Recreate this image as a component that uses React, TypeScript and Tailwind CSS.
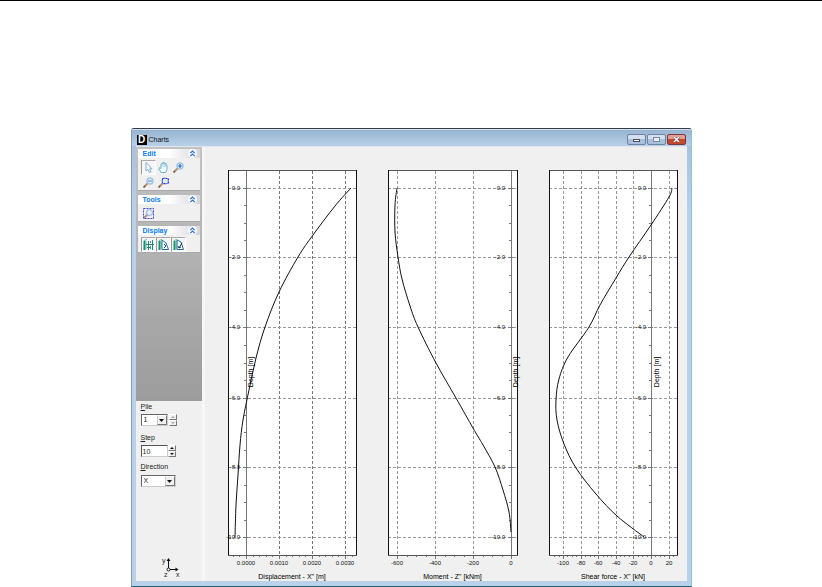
import React from "react";

type Point = [number, number];

type ChartSpec = {
  title: string;
  originX: number;
  left: number;
  right: number;
  axisX: number;
  labelEnd: number;
  depthX: number;
  gridColor: string;
  ticks: { x: number; label: string }[];
  minorX: number[];
  curve: Point[];
};

const TOP = 170;
const BOTTOM = 555;

const depthRows = [
  { y: 188, label: "0.0" },
  { y: 257, label: "-2.0" },
  { y: 327, label: "-4.0" },
  { y: 398, label: "-6.0" },
  { y: 467, label: "-8.0" },
  { y: 537, label: "-10.0" },
];

const minorDepths = [205, 223, 240, 275, 292, 310, 345, 363, 380, 415, 432, 450, 485, 502, 520];

const charts: ChartSpec[] = [
  {
    title: 'Displacement - X" [m]',
    originX: 208,
    left: 228,
    right: 356,
    axisX: 246,
    labelEnd: 240,
    depthX: 253,
    gridColor: "#777",
    ticks: [
      { x: 246, label: "0.0000" },
      { x: 279, label: "0.0010" },
      { x: 312, label: "0.0020" },
      { x: 345, label: "0.0030" },
    ],
    minorX: [233, 239, 253, 259, 266, 272, 286, 292, 299, 305, 319, 325, 332, 338, 352],
    curve: [
      [351, 188], [335, 206], [313, 235], [298, 257], [279, 292], [265, 327], [256, 358],
      [249, 390], [243, 420], [240, 445], [238, 475], [236, 505], [235, 537],
    ],
  },
  {
    title: 'Moment - Z" [kNm]',
    originX: 367,
    left: 388,
    right: 517,
    axisX: 511,
    labelEnd: 505,
    depthX: 518,
    gridColor: "#999",
    ticks: [
      { x: 397, label: "-600" },
      { x: 435, label: "-400" },
      { x: 473, label: "-200" },
      { x: 511, label: "0" },
    ],
    minorX: [407, 416, 426, 445, 454, 464, 483, 492, 502],
    curve: [
      [397, 188], [395, 205], [395, 232], [398, 257], [402, 279], [410, 306], [418, 327],
      [436, 363], [456, 398], [473, 428], [483, 445], [495, 467], [503, 490], [509, 512], [511, 532],
    ],
  },
  {
    title: 'Shear force - X" [kN]',
    originX: 526,
    left: 549,
    right: 677,
    axisX: 651,
    labelEnd: 646,
    depthX: 659,
    gridColor: "#999",
    ticks: [
      { x: 563, label: "-100" },
      { x: 581, label: "-80" },
      { x: 598, label: "-60" },
      { x: 616, label: "-40" },
      { x: 633, label: "-20" },
      { x: 651, label: "0" },
      { x: 669, label: "20" },
    ],
    minorX: [554, 559, 567, 572, 576, 585, 590, 594, 603, 607, 611, 620, 624, 629, 638, 642, 647, 655, 660, 664, 673],
    curve: [
      [672, 188], [669, 197], [651, 225], [629, 257], [616, 278], [600, 305], [589, 327],
      [568, 357], [559, 379], [556, 400], [557, 420], [564, 444], [576, 468], [596, 494], [617, 516], [644, 537],
    ],
  },
];

function smoothPath(points: Point[]) {
  let d = `M${points[0][0]} ${points[0][1]}`;
  for (let i = 0; i < points.length - 1; i++) {
    const before = points[Math.max(i - 1, 0)];
    const from = points[i];
    const to = points[i + 1];
    const after = points[Math.min(i + 2, points.length - 1)];
    d += `C${from[0] + (to[0] - before[0]) / 6} ${from[1] + (to[1] - before[1]) / 6}`;
    d += ` ${to[0] - (after[0] - from[0]) / 6} ${to[1] - (after[1] - from[1]) / 6} ${to[0]} ${to[1]}`;
  }
  return d;
}

function Chart({ spec }: { spec: ChartSpec }) {
  const { left, right, axisX } = spec;
  return (
    <figure className="min-w-0 flex-1">
      <svg
        viewBox={`${spec.originX} 147 159 434`}
        className="block w-full overflow-visible"
        role="img"
        aria-label={spec.title}
      >
        <rect x={left} y={TOP} width={right - left + 1} height={BOTTOM - TOP + 1} fill="#fff" />
        <g stroke={spec.gridColor} strokeDasharray="3 2">
          {spec.ticks
            .filter((t) => t.x !== axisX)
            .map((t) => (
              <line key={t.x} x1={t.x + 0.5} x2={t.x + 0.5} y1={TOP + 1} y2={BOTTOM} />
            ))}
        </g>
        <g stroke="#999" strokeDasharray="3 2">
          {depthRows.map((d) => (
            <line key={d.y} x1={left} x2={right} y1={d.y + 0.5} y2={d.y + 0.5} />
          ))}
        </g>
        <g stroke="#777">
          <line x1={axisX + 0.5} x2={axisX + 0.5} y1={TOP} y2={BOTTOM + 4} />
          {depthRows.map((d) => (
            <line key={d.y} x1={axisX - 3} x2={axisX + 2} y1={d.y + 0.5} y2={d.y + 0.5} />
          ))}
          {minorDepths.map((y) => (
            <line key={y} x1={axisX - 2} x2={axisX + 1} y1={y + 0.5} y2={y + 0.5} />
          ))}
          {spec.ticks.map((t) => (
            <line key={t.x} x1={t.x + 0.5} x2={t.x + 0.5} y1={BOTTOM} y2={BOTTOM + 4} />
          ))}
          {spec.minorX.map((x) => (
            <line key={x} x1={x + 0.5} x2={x + 0.5} y1={BOTTOM} y2={BOTTOM + 2} />
          ))}
        </g>
        <path d={`M${left} ${TOP + 0.5}H${right + 1}M${left} ${BOTTOM + 0.5}H${right + 1}`} stroke="#555" />
        <path d={`M${left + 0.5} ${TOP}V${BOTTOM}M${right + 0.5} ${TOP}V${BOTTOM}`} stroke="#111" />
        <path d={smoothPath(spec.curve)} fill="none" stroke="#111" />
        <g className="text-[6px]" fill="#111">
          {depthRows.map((d) => (
            <text key={d.y} x={spec.labelEnd} y={d.y + 2} textAnchor="end">
              {d.label}
            </text>
          ))}
          {spec.ticks.map((t) => (
            <text key={t.x} x={t.x} y={565} textAnchor="middle">
              {t.label}
            </text>
          ))}
        </g>
        <g className="text-[7px]" fill="#000" textAnchor="middle">
          <text transform={`translate(${spec.depthX} 372) rotate(-90)`}>Depth [m]</text>
          <text x={(left + right) / 2} y={579}>
            {spec.title}
          </text>
        </g>
      </svg>
    </figure>
  );
}

function Panel({ title, children }: { title: string; children: React.ReactNode }) {
  return (
    <section className="mb-[3px] border-b border-[#aaa] bg-[#f0f0f0]">
      <h2 className="flex h-[9px] items-center justify-between bg-gradient-to-r from-white from-50% to-[#d4d4dc] pr-[3px] pl-[5px] text-[7px] leading-[9px] font-bold text-[#0a7cf0]">
        {title}
        <button type="button" aria-label={`Collapse ${title}`} className="size-[9px] rounded-full bg-white/80">
          <svg viewBox="0 0 9 9" className="size-[9px]" fill="none" stroke="#2470dc" strokeWidth="1.200">
            <path d="M2.300 4.200L4.500 2L6.700 4.200M2.300 7.200L4.500 5L6.700 7.200" />
          </svg>
        </button>
      </h2>
      <div className="flex flex-wrap px-[3px] pt-[2px]">{children}</div>
    </section>
  );
}

function Tool({ label, pressed, children }: { label: string; pressed?: boolean; children: React.ReactNode }) {
  return (
    <button
      type="button"
      aria-label={label}
      className={
        "flex h-[15px] w-[15px] items-center justify-center border " +
        (pressed ? "border-t-[#aaa] border-r-white border-b-white border-l-[#999] bg-[#f6f6f6]" : "border-transparent")
      }
    >
      <svg viewBox="0 0 13 13" className="size-[13px] shrink-0" fill="none">
        {children}
      </svg>
    </button>
  );
}

function Magnifier() {
  return (
    <>
      <path d="M2 11L5.500 7.500" stroke="#b89068" strokeWidth="2" />
      <path d="M1.500 11.500L3 10" stroke="#665548" strokeWidth="1.500" />
      <circle cx="8" cy="5" r="3.200" fill="#dcefff" stroke="#8aaed4" />
    </>
  );
}

function PileFrame() {
  return (
    <>
      <path d="M2.500 3V12" stroke="#159070" strokeWidth="2" />
      <path d="M2 2.500L5 1.500M4 3V11" stroke="#65b8a0" />
    </>
  );
}

function Spinner({ label, faded }: { label: string; faded?: boolean }) {
  const fill = faded ? "#aaa" : "#111";
  const cell =
    "flex h-[6px] w-[8px] items-center justify-center border border-t-white border-r-[#777] border-b-[#777] border-l-white bg-[#f0f0f0]";
  return (
    <div className="flex flex-col">
      <button type="button" aria-label={`Increase ${label}`} className={cell}>
        <svg viewBox="0 0 4 2" className="h-[2px] w-[4px] shrink-0" fill={fill}>
          <path d="M0 2L2 0L4 2Z" />
        </svg>
      </button>
      <button type="button" aria-label={`Decrease ${label}`} className={cell}>
        <svg viewBox="0 0 4 2" className="h-[2px] w-[4px] shrink-0" fill={fill}>
          <path d="M0 0L2 2L4 0Z" />
        </svg>
      </button>
    </div>
  );
}

function DropDown({ id, options, wide }: { id: string; options: string[]; wide?: boolean }) {
  return (
    <div
      className={
        "grid h-[12px] border border-t-[#666] border-r-[#ccc] border-b-[#ccc] border-l-[#666] bg-white " +
        (wide ? "w-[35px]" : "w-[27px]")
      }
    >
      <select
        id={id}
        className="col-start-1 row-start-1 h-[10px] w-full appearance-none bg-transparent pl-[2px] text-[7px] leading-[10px] text-[#222] outline-none"
      >
        {options.map((o) => (
          <option key={o}>{o}</option>
        ))}
      </select>
      <span className="pointer-events-none col-start-1 row-start-1 flex h-[10px] w-[10px] items-center justify-center justify-self-end border border-t-white border-r-[#777] border-b-[#777] border-l-[#ccc] bg-[#f0f0f0]">
        <svg viewBox="0 0 5 3" className="h-[3px] w-[5px] shrink-0" fill="#111">
          <path d="M0 0H5L2.500 3Z" />
        </svg>
      </span>
    </div>
  );
}

function FieldLabel({ id, text }: { id: string; text: string }) {
  return (
    <label htmlFor={id} className="block text-[7px] leading-[8px] text-[#222]">
      <span className="underline">{text[0]}</span>
      {text.slice(1)}
    </label>
  );
}

function Sidebar() {
  return (
    <aside className="flex w-[66px] shrink-0 flex-col">
      <div className="h-[254px] bg-gradient-to-b from-[#c2c2c2] to-[#9c9c9c] px-[2px] pt-[2px]">
        <Panel title="Edit">
          <Tool label="Select" pressed>
            <path d="M4 1.500V10L6 8.300L7.500 11.500L9 10.800L7.600 7.800H10Z" fill="#fff" stroke="#7fb0cc" />
          </Tool>
          <Tool label="Pan">
            <path
              d="M4 11.500L2 8L2.500 6.500L4 7.500V3L5 2.500L6 3V1.500H7.500V3L9 2.500V4.500L10 4.500V8.500L8.500 11.500Z"
              fill="#effaff"
              stroke="#70b0c8"
            />
            <path d="M6 3V6M8 3V6" stroke="#70b0c8" strokeWidth="0.600" />
          </Tool>
          <Tool label="Zoom in">
            <Magnifier />
            <path d="M6 5H10M8 3V7" stroke="#2468c8" strokeWidth="1.200" />
          </Tool>
          <Tool label="Zoom out">
            <Magnifier />
            <path d="M6 5H10" stroke="#5488c8" />
          </Tool>
          <Tool label="Zoom area">
            <Magnifier />
            <path d="M5.500 2.500H11.500V8M5.500 2.500V7.500H10.500" stroke="#3838e8" strokeDasharray="2 1" />
          </Tool>
        </Panel>
        <div className="h-[28px] overflow-hidden pt-px">
          <Panel title="Tools">
            <Tool label="Zoom limits">
              <path d="M2 11L5.500 7.500" stroke="#a890a0" strokeWidth="2" />
              <circle cx="7.500" cy="5.500" r="3" fill="#e4f0ff" stroke="#8aaed4" />
              <rect x="1.500" y="1.500" width="10" height="10" stroke="#4646d8" strokeDasharray="2 1" />
            </Tool>
          </Panel>
        </div>
        <div className="pt-[4px]">
          <Panel title="Display">
            <Tool label="Foundation plan" pressed>
              <PileFrame />
              <path d="M6.500 3V12M10.500 2V12M4 6.500H12M5 9.500H8" stroke="#208878" />
              <path d="M8.500 3V5M8.500 8V11" stroke="#3a9a90" />
            </Tool>
            <Tool label="Displacement chart" pressed>
              <PileFrame />
              <path d="M5 11.500H11.500L9 5L5 2V11.500" fill="#fff" stroke="#207090" />
              <path d="M7 6L9 8L7 10" stroke="#2858a0" />
            </Tool>
            <Tool label="Force chart" pressed>
              <PileFrame />
              <path d="M5 11.500H11.500L9 4L5 2V11.500" fill="#fff" stroke="#207090" />
              <path d="M10 5L7 10M6 8L7 10L9 9" stroke="#183868" />
            </Tool>
          </Panel>
        </div>
      </div>
      <form className="flex flex-1 flex-col items-start pt-[2px] pl-[5px]" onSubmit={(e) => e.preventDefault()}>
        <FieldLabel id="pile" text="Pile" />
        <div className="mt-[3px] flex gap-px">
          <DropDown id="pile" options={["1", "2", "3"]} />
          <Spinner label="pile" faded />
        </div>
        <div className="mt-[8px]">
          <FieldLabel id="step" text="Step" />
        </div>
        <div className="mt-[3px] flex">
          <input
            id="step"
            type="text"
            defaultValue="10"
            className="h-[12px] w-[27px] border border-t-[#555] border-r-[#ccc] border-b-[#ccc] border-l-[#555] bg-white pl-px text-[7px] leading-[10px] text-[#222] outline-none"
          />
          <Spinner label="step" />
        </div>
        <div className="mt-[6px]">
          <FieldLabel id="direction" text="Direction" />
        </div>
        <div className="mt-[4px]">
          <DropDown id="direction" options={["X", "Y"]} wide />
        </div>
        <svg viewBox="0 0 22 22" className="mt-auto mb-[3px] ml-5 size-[22px]" fill="none" stroke="#111">
          <path d="M7.500 12V4M9 13.500H16" />
          <path d="M5.500 5L7.500 2L9.500 5ZM14.500 11.500L17.500 13.500L14.500 15.500Z" fill="#111" stroke="none" />
          <circle cx="7.500" cy="13.500" r="1.500" fill="#fff" />
          <g className="text-[7px]" fill="#222" stroke="none">
            <text x="1" y="7">y</text>
            <text x="3" y="21">z</text>
            <text x="15" y="21">x</text>
          </g>
        </svg>
      </form>
    </aside>
  );
}

const captionButton =
  "flex h-[11px] w-[19px] items-center justify-center rounded-[2px] border border-[#6c84a2] bg-gradient-to-b from-[#d4e0ee] from-50% to-[#a9c0dc] to-50%";

export default function App() {
  return (
    <main className="border-t border-black bg-white pt-[127px] font-['Liberation_Sans',Arial,sans-serif]">
      <div className="mx-auto w-full max-w-[561px] rounded-t-[3px] border border-t-[#333c48] border-r-[#8fc3d4] border-b-[#1d6078] border-l-[#8c9aa6] bg-[#b9d1ea]">
        <header className="flex h-[17px] items-center rounded-t-[2px] border-t border-[#d5e4f2] bg-gradient-to-b from-[#98b4d1] to-[#b9d0e9] pt-[3px] pr-[5px] pl-[5px]">
          <span className="flex size-[10px] items-center justify-center bg-black text-[10px] leading-[10px] font-bold text-white">
            D
          </span>
          <h1 className="flex-1 pl-[2px] text-[7px] leading-[10px] text-[#111]">Charts</h1>
          <div className="flex gap-px">
            <button type="button" aria-label="Minimize" className={captionButton}>
              <span className="mt-[2px] h-[3px] w-[7px] border border-[#48506a] bg-white" />
            </button>
            <button type="button" aria-label="Maximize" className={captionButton}>
              <span className="h-[5px] w-[7px] border border-[#7c8898] bg-[#e8eef4]" />
            </button>
            <button
              type="button"
              aria-label="Close"
              className="flex h-[11px] w-[19px] items-center justify-center rounded-[2px] border border-[#7a3840] bg-gradient-to-b from-[#e0a090] from-50% to-[#c54830] to-50%"
            >
              <svg viewBox="0 0 7 5" className="h-[5px] w-[7px]" fill="none">
                <path d="M1 0L6 5M6 0L1 5" stroke="#604048" strokeWidth="2.500" />
                <path d="M1 0L6 5M6 0L1 5" stroke="#fff" strokeWidth="1.500" />
              </svg>
            </button>
          </div>
        </header>
        <div className="bg-gradient-to-b from-[#a9c2de] to-[#b9d1ea] to-[70px] px-1 pb-[5px]">
          <div className="flex border-t border-[#dce6f0] bg-[#f0f0f0]">
            <Sidebar />
            <div className="w-[3px] shrink-0 bg-[#f6f6f6]" />
            <div className="flex min-w-0 flex-1 pr-[2px] pl-[3px]">
              {charts.map((c) => (
                <Chart key={c.title} spec={c} />
              ))}
            </div>
          </div>
        </div>
      </div>
    </main>
  );
}
